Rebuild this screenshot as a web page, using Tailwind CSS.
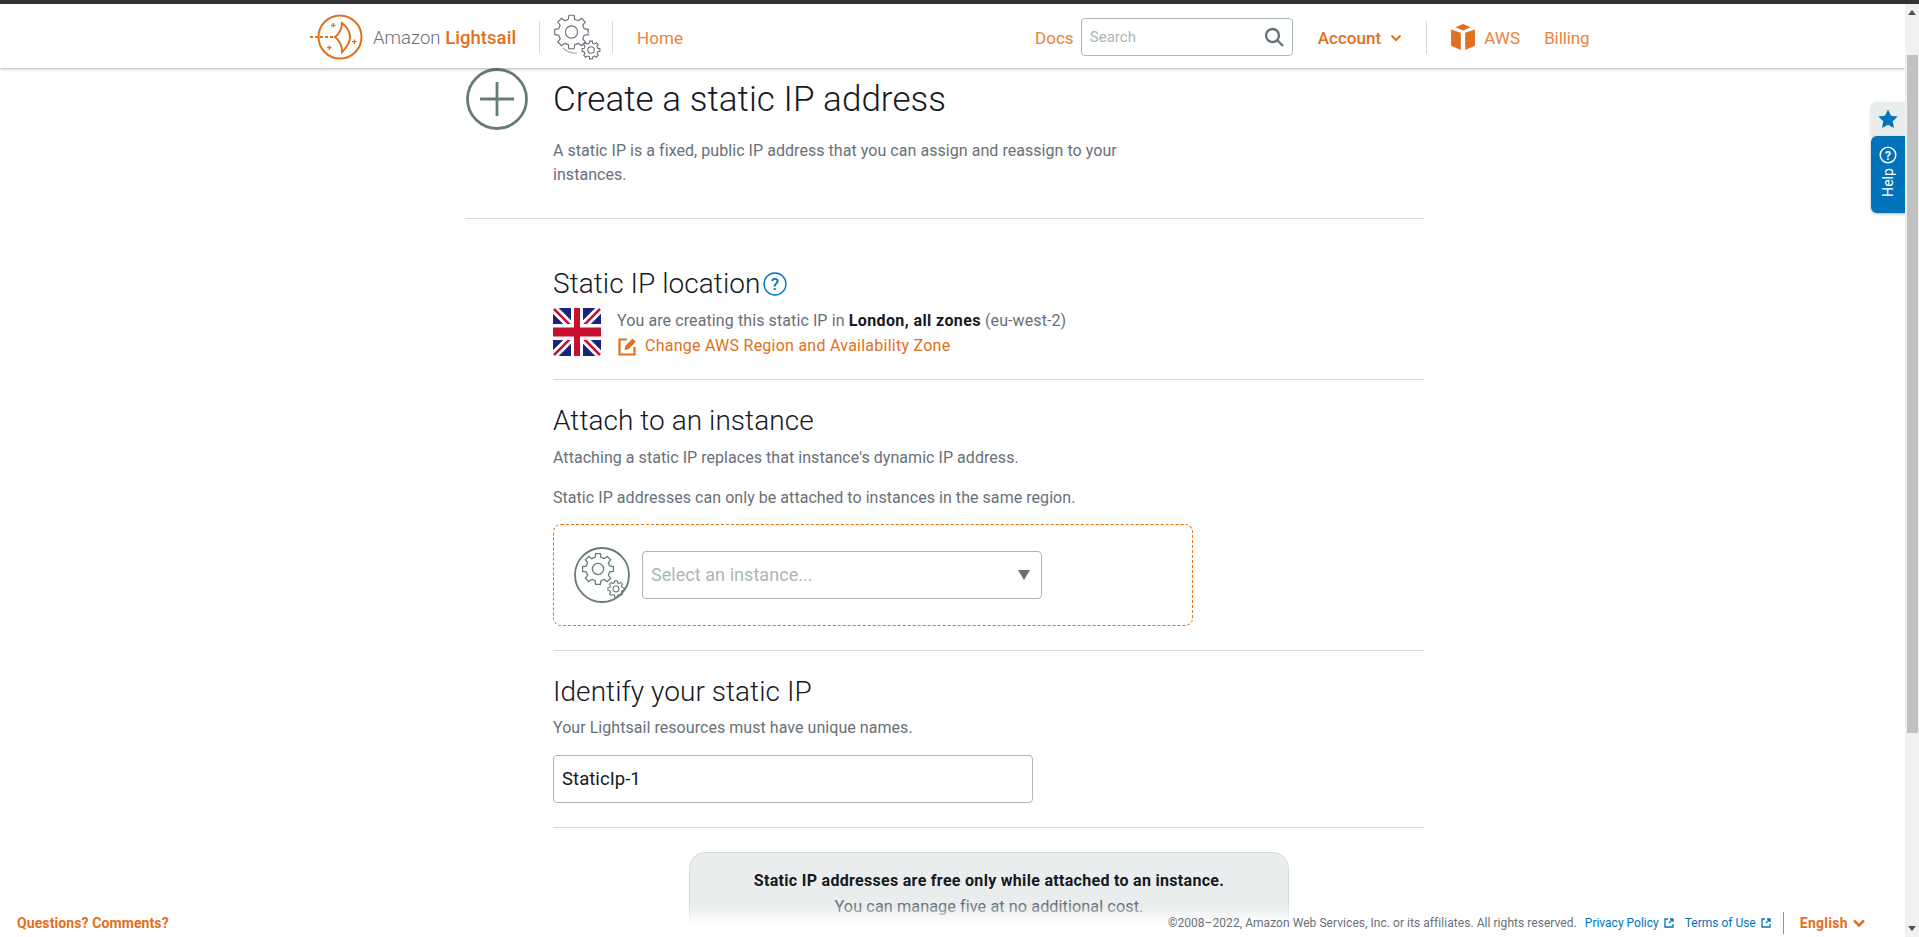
<!doctype html>
<html lang="en"><head><meta charset="utf-8"><title>Create a static IP address</title>
<script src="https://cdn.jsdelivr.net/npm/@tailwindcss/browser@4"></script></head>
<body class="m-0 bg-white">
<div class="flex flex-col w-[1919px] h-[937px] overflow-hidden font-['Roboto',sans-serif] text-[16px] tracking-[0.05px] text-[#687078] leading-[24px]">
  <div class="h-[4px] shrink-0 bg-[#333333]"></div>
  <div class="flex flex-1 min-h-0">
    <div class="relative flex-1 min-w-0 overflow-hidden">
      <!-- header -->
      <header class="relative z-20 h-[64px] bg-white shadow-[0_1px_3px_rgba(0,0,0,0.3)] flex items-center pl-[310px] pt-[3px] text-[17px] text-[#e8833a]">
        <svg class="w-[54px] h-[46px] shrink-0 -mt-px" viewBox="0 0 54 46" fill="none" stroke="#e07020" stroke-width="2">
          <defs><g id="gear" fill="none"><g id="t4"><path id="t" d="M-3.630-14.550L-3.050-19.260L3.050-19.260L3.630-14.550A15 15 0 0 1 7.730-12.860"/><use href="#t" transform="rotate(45)"/><use href="#t" transform="rotate(90)"/><use href="#t" transform="rotate(135)"/></g><use href="#t4" transform="rotate(180)"/><circle r="7"/></g></defs>
          <circle cx="30" cy="23" r="21.500"/><path d="M32 9C37 13 40 18 40 23C40 28 37 33 32 38C32 32 29 26 25 23C29 20 32 15 32 9z"/><path d="M0 23h26" stroke-dasharray="3 2"/><path d="M23.300 9v4.600M21 11.300h4.600M19.300 31.400v4.600M17 33.700h4.600M44.300 25.400v4.600M42 27.700h4.600" stroke-width="1.300"/></svg>
        <span class="ml-[9px] text-[#687078] text-[18.500px] font-light w-[142px] whitespace-nowrap">Amazon <span class="font-medium text-[#e07020]">Lightsail</span></span>
        <span class="ml-[24px] -mt-px w-px h-[32px] bg-[#d5dbdb]"></span>
        <svg class="ml-[13px] -mt-px w-[48px] h-[46px] shrink-0" viewBox="0 0 48 46" stroke="#687078"><use href="#gear" transform="translate(18.500 18) scale(.87)" stroke-width="1.300"/><use href="#gear" transform="translate(38 36) scale(.46)" stroke-width="2.400"/><path d="M34 16a18 18 0 0 1 2 6M10 34a18 18 0 0 0 14 5" fill="none" stroke="#aab7b8" stroke-width="1.200"/></svg>
        <span class="ml-[11px] -mt-px w-px h-[32px] bg-[#d5dbdb]"></span>
        <a class="ml-[24px]">Home</a>
        <a class="ml-[352px]">Docs</a>
        <div class="ml-[7px] -mt-px w-[212px] h-[38px] border border-[#aab7b8] rounded-[4px] flex items-center pl-[8px] pr-[8px] justify-between">
          <span class="text-[15px] text-[#aab7b8]">Search</span>
          <svg class="w-[20px] h-[20px]" viewBox="0 0 20 20" fill="none" stroke="#687078" stroke-width="2.400"><circle cx="8.500" cy="8.500" r="6.500"/><path d="M13 13l6 6"/></svg>
        </div>
        <span class="ml-[25px] font-medium text-[#e07020]">Account</span>
        <svg class="ml-[9px] w-[12px] h-[8px]" viewBox="0 0 12 8" fill="none" stroke="#e07020" stroke-width="2"><path d="M1.500 1.500l4.500 4.500 4.500-4.500"/></svg>
        <span class="ml-[24px] -mt-px w-px h-[33px] bg-[#d5dbdb]"></span>
        <svg class="ml-[24px] -mt-px w-[24px] h-[26px]" viewBox="0 0 22 24" fill="#e07020"><path d="M11 0l7 3-7 3-7-3z"/><path d="M0 5l9 3v16l-9-4z"/><path d="M22 5l-9 3v16l9-4z"/></svg>
        <a class="ml-[9px]">AWS</a>
        <a class="ml-[24px] tracking-[-0.1px]">Billing</a>
      </header>
      <!-- main -->
      <main class="absolute top-[64px] left-[465px] w-[959px]">
        <div class="flex border-b border-[#d5dbdb] h-[151px]">
          <svg class="w-[62px] h-[62px] shrink-0 ml-px" viewBox="0 0 62 62" fill="none" stroke="#687b7b" stroke-width="2.800"><circle cx="31" cy="31" r="29.500"/><path d="M31 14v34M14 31h34" /></svg>
          <div class="ml-[25px] w-[590px]">
            <h1 class="text-[35px] leading-[40px] text-[#16191f] mt-[12px] font-light">Create a static IP address</h1>
            <p class="mt-[19px]">A static IP is a fixed, public IP address that you can assign and reassign to your instances.</p>
          </div>
        </div>
        <div class="ml-[88px]">
          <section class="h-[161px] border-b border-[#d5dbdb] pt-[48px]">
            <h2 class="flex items-center text-[28px] leading-[34px] text-[#16191f] font-light">Static IP location
              <svg class="ml-[3px] w-[24px] h-[24px]" viewBox="0 0 24 24" fill="none"><circle cx="12" cy="12" r="11" stroke="#0073bb" stroke-width="1.300"/><text x="12" y="18" text-anchor="middle" font-size="17" font-weight="500" fill="#0073bb" font-family="Roboto">?</text></svg>
            </h2>
            <div class="flex mt-[7px]">
              <svg class="w-[48px] h-[48px] rounded-[4px]" viewBox="0 0 48 48"><rect width="48" height="48" fill="#1a237b"/><path d="M0 0l48 48M48 0L0 48" stroke="#fff" stroke-width="8"/><path d="M0 0l48 48M48 0L0 48" stroke="#c8102e" stroke-width="2.500"/><path d="M24 0v48" stroke="#fff" stroke-width="12"/><path d="M0 24h48" stroke="#fff" stroke-width="16"/><path d="M24 0v48" stroke="#c8102e" stroke-width="6"/><path d="M0 24h48" stroke="#c8102e" stroke-width="9"/></svg>
              <div class="ml-[16px]">
                <p class="mt-px tracking-[0.1px]">You are creating this static IP in <b class="font-bold text-[#16191f] tracking-[0.4px]">London, all zones</b> (eu-west-2)</p>
                <a class="flex items-center text-[#e07020] mt-px tracking-[0.25px]"><svg class="ml-px w-[19px] h-[19px] mr-[8px]" viewBox="0 0 19 19" fill="none" stroke="#e07020" stroke-width="2.200"><path d="M9 2.500H1.500v15h15V10"/><path d="M6.500 13l.8-4 7.200-7.500 3.200 3.200-7.200 7.500z" fill="#e07020" stroke="none"/></svg>Change AWS Region and Availability Zone</a>
              </div>
            </div>
          </section>
          <section class="h-[271px] border-b border-[#d5dbdb] pt-[24px]">
            <h2 class="text-[28px] leading-[34px] text-[#16191f] font-light">Attach to an instance</h2>
            <p class="mt-[8px]">Attaching a static IP replaces that instance's dynamic IP address.</p>
            <p class="mt-[16px]">Static IP addresses can only be attached to instances in the same region.</p>
            <div class="mt-[14px] w-[640px] h-[102px] border border-dashed border-[#ec7211] rounded-[8px] flex items-center pl-[20px]">
              <svg class="w-[56px] h-[56px] shrink-0" viewBox="0 0 56 56" stroke="#687b7b"><circle cx="28" cy="28" r="27" fill="none" stroke-width="1.800"/><use href="#gear" transform="translate(24 22) scale(.8)" stroke-width="1.600"/><use href="#gear" transform="translate(42 42) scale(.42)" stroke-width="2.600"/></svg>
              <div class="ml-[12px] w-[400px] h-[48px] border border-[#aab7b8] rounded-[4px] flex items-center justify-between pl-[8px] pr-[11px] text-[18px] text-[#aab7b8]">Select an instance...<span class="w-0 h-0 border-l-[6px] border-r-[6px] border-t-[10px] border-l-transparent border-r-transparent border-t-[#687078]"></span></div>
            </div>
          </section>
          <section class="h-[177px] border-b border-[#d5dbdb] pt-[24px]">
            <h2 class="text-[28px] leading-[34px] text-[#16191f] font-light">Identify your static IP</h2>
            <p class="mt-[7px]">Your Lightsail resources must have unique names.</p>
            <div class="mt-[15px] w-[480px] h-[48px] border border-[#aab7b8] rounded-[4px] flex items-center pl-[8px] text-[18.500px] text-[#16191f]">StaticIp-1</div>
          </section>
          <div class="ml-[136px] mt-[24px] w-[600px] h-[150px] bg-[#eaeded] border border-[#d5dbdb] rounded-[16px] text-center pt-[16px] text-[16.300px]">
            <p class="font-bold text-[#16191f] text-[16px] tracking-[0.3px]">Static IP addresses are free only while attached to an instance.</p>
            <p class="mt-[2px]">You can manage five at no additional cost.</p>
          </div>
        </div>
      </main>
      <!-- side tabs -->
      <div class="absolute z-20 top-[98px] right-0 w-[34px] flex flex-col">
        <div class="h-[34px] bg-[#eaeded] rounded-tl-[6px] flex items-center justify-center shadow-[0_1px_3px_rgba(0,0,0,0.2)]"><svg class="w-[20px] h-[20px]" viewBox="0 0 20 20" fill="#0073bb"><path d="M10 0.500l2.900 6.300 6.800.8-5 4.700 1.300 6.800-6-3.400-6 3.400 1.300-6.800-5-4.700 6.800-.8z"/></svg></div>
        <div class="h-[77px] bg-[#0073bb] rounded-l-[6px] flex flex-col items-center pt-[10px] text-white shadow-[0_1px_3px_rgba(0,0,0,0.3)]">
          <svg class="w-[18px] h-[18px]" viewBox="0 0 18 18" fill="none"><circle cx="9" cy="9" r="7.800" stroke="#fff" stroke-width="1.500"/><text x="9" y="13.500" text-anchor="middle" font-size="12" font-weight="700" fill="#fff" font-family="Roboto">?</text></svg>
          <span class="mt-[4px] text-[14px] leading-[18px] [writing-mode:vertical-rl] rotate-180">Help</span>
        </div>
      </div>
      <!-- footer -->
      <footer class="absolute z-10 left-0 right-0 bottom-0 h-[32px] bg-linear-to-b from-white/0 to-white to-[60%] flex items-center pl-[17px] pr-[40px] text-[12px] pt-[3px] tracking-normal">
        <a class="font-bold text-[14px] tracking-[0.1px] text-[#e07020] mr-auto">Questions? Comments?</a>
        <span class="tracking-[0.05px]">©2008–2022, Amazon Web Services, Inc. or its affiliates. All rights reserved.</span>
        <a class="ml-[8px] text-[#0073bb] flex items-center">Privacy Policy<svg class="ml-[5px] w-[10px] h-[10px]" viewBox="0 0 10 10" fill="none" stroke="#0073bb" stroke-width="1.300"><path d="M4 1H1v8h8V6M5 5l4-4M6 1h3v3"/></svg></a>
        <a class="ml-[11px] text-[#0073bb] flex items-center">Terms of Use<svg class="ml-[5px] w-[10px] h-[10px]" viewBox="0 0 10 10" fill="none" stroke="#0073bb" stroke-width="1.300"><path d="M4 1H1v8h8V6M5 5l4-4M6 1h3v3"/></svg></a>
        <span class="ml-[12px] w-px h-[22px] bg-[#879596]"></span>
        <a class="ml-[16px] font-bold text-[14px] tracking-[0.3px] text-[#e07020]">English</a>
        <svg class="ml-[5px] w-[12px] h-[8px]" viewBox="0 0 12 8" fill="none" stroke="#e07020" stroke-width="2.500"><path d="M1 1.500l5 5 5-5"/></svg>
      </footer>
    </div>
    <!-- scrollbar -->
    <div class="w-[14px] shrink-0 bg-[#f1f1f1] flex flex-col items-center">
      <span class="mt-[6px] w-0 h-0 border-l-[4px] border-r-[4px] border-b-[5px] border-l-transparent border-r-transparent border-b-[#505050]"></span>
      <div class="mt-[40px] w-[11px] h-[678px] bg-[#c1c1c1]"></div>
      <span class="mt-auto mb-[6px] w-0 h-0 border-l-[4px] border-r-[4px] border-t-[5px] border-l-transparent border-r-transparent border-t-[#505050]"></span>
    </div>
  </div>
</div>
</body></html>
